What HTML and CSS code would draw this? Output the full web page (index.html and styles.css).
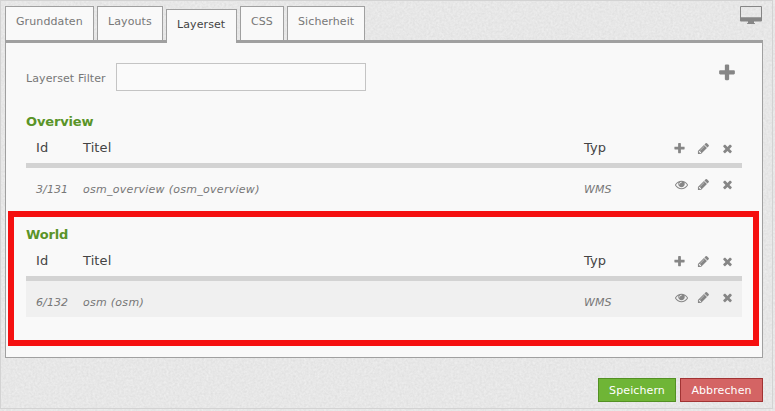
FILE: index.html
```html
<!DOCTYPE html>
<html lang="de">
<head>
<meta charset="utf-8">
<title>Layerset</title>
<link rel="stylesheet" href="styles.css">
</head>
<body>
<svg class="texture" width="775" height="411" aria-hidden="true">
  <filter id="grain" x="0" y="0" width="100%" height="100%" color-interpolation-filters="sRGB">
    <feTurbulence type="fractalNoise" baseFrequency="0.45" numOctaves="2" seed="4"/>
    <feColorMatrix values="0.07 0.03 0 0 0.855  0.07 0.03 0 0 0.855  0.07 0.03 0 0 0.855  0 0 0 0 1"/>
  </filter>
  <rect width="775" height="411" filter="url(#grain)"/>
</svg>
<svg class="symbols" aria-hidden="true">
  <symbol id="plus" viewBox="0 0 1792 1792"><path d="M1600 736v192q0 40-28 68t-68 28h-416v416q0 40-28 68t-68 28h-192q-40 0-68-28t-28-68v-416h-416q-40 0-68-28t-28-68v-192q0-40 28-68t68-28h416v-416q0-40 28-68t68-28h192q40 0 68 28t28 68v416h416q40 0 68 28t28 68z"/></symbol>
  <symbol id="pencil" viewBox="0 0 1792 1792"><path d="M491 1536l91-91-235-235-91 91v107h128v128h107zm523-928q0-22-22-22-10 0-17 7l-542 542q-7 7-7 17 0 22 22 22 10 0 17-7l542-542q7-7 7-17zm-54-192l416 416-832 832h-416v-416zm683 96q0 53-37 90l-166 166-416-416 166-165q36-38 90-38 53 0 91 38l235 234q37 39 37 91z"/></symbol>
  <symbol id="times" viewBox="0 0 1792 1792"><path d="M1490 1322q0 40-28 68l-136 136q-28 28-68 28t-68-28l-294-294-294 294q-28 28-68 28t-68-28l-136-136q-28-28-28-68t28-68l294-294-294-294q-28-28-28-68t28-68l136-136q28-28 68-28t68 28l294 294 294-294q28-28 68-28t68 28l136 136q28 28 28 68t-28 68l-294 294 294 294q28 28 28 68z"/></symbol>
  <symbol id="eye" viewBox="0 0 1792 1792"><path d="M1664 960q-152-236-381-353 61 104 61 225 0 185-131.500 316.500t-316.500 131.500-316.500-131.500-131.500-316.500q0-121 61-225-229 117-381 353 133 205 333.500 326.500t434.500 121.500 434.500-121.500 333.500-326.500zm-720-384q0-20-14-34t-34-14q-125 0-214.500 89.500t-89.500 214.500q0 20 14 34t34 14 34-14 14-34q0-86 61-147t147-61q20 0 34-14t14-34zm848 384q0 34-20 69-140 230-376.500 368.500t-499.500 138.500-499.500-139-376.500-368q-20-35-20-69t20-69q140-229 376.500-368t499.500-139 499.500 139 376.500 368q20 35 20 69z"/></symbol>
</svg>
<div class="page">
  <header class="top">
    <nav class="tabs">
      <a class="tab tab-data">Grunddaten</a>
      <a class="tab tab-layouts">Layouts</a>
      <a class="tab tab-layerset active">Layerset</a>
      <a class="tab tab-css">CSS</a>
      <a class="tab tab-security">Sicherheit</a>
    </nav>
    <svg class="monitor" viewBox="0 0 22 18"><path fill-rule="evenodd" d="M1 0h20a1 1 0 0 1 1 1v13.500a1 1 0 0 1-1 1H14v1.500l1 .3v.7H7v-.7l1-.3v-1.500H1A1 1 0 0 1 0 14.500V1A1 1 0 0 1 1 0zM1 1v10.200h20V1z"/></svg>
  </header>
  <main class="panel">
    <div class="filter">
      <label class="filter-label" for="filter">Layerset Filter</label>
      <input class="filter-input" id="filter" type="text">
      <svg class="add"><use href="#plus"/></svg>
    </div>
    <section class="layerset">
      <h2>Overview</h2>
      <div class="row head"><span>Id</span><span>Titel</span><span>Typ</span>
        <div class="actions"><svg><use href="#plus"/></svg><svg><use href="#pencil"/></svg><svg><use href="#times"/></svg></div>
      </div>
      <div class="row item"><span>3/131</span><span class="title">osm_overview (osm_overview)</span><span>WMS</span>
        <div class="actions"><svg class="eye"><use href="#eye"/></svg><svg><use href="#pencil"/></svg><svg><use href="#times"/></svg></div>
      </div>
    </section>
    <section class="layerset marked">
      <h2>World</h2>
      <div class="row head"><span>Id</span><span>Titel</span><span>Typ</span>
        <div class="actions"><svg><use href="#plus"/></svg><svg><use href="#pencil"/></svg><svg><use href="#times"/></svg></div>
      </div>
      <div class="row item shaded"><span>6/132</span><span class="title">osm (osm)</span><span>WMS</span>
        <div class="actions"><svg class="eye"><use href="#eye"/></svg><svg><use href="#pencil"/></svg><svg><use href="#times"/></svg></div>
      </div>
    </section>
  </main>
  <footer class="buttons">
    <button class="button save">Speichern</button>
    <button class="button cancel">Abbrechen</button>
  </footer>
</div>
</body>
</html>
```
FILE: styles.css
```css
* { box-sizing: border-box; }
body {
  margin: 0;
  width: 775px;
  height: 411px;
  overflow: hidden;
  background: #e6e6e6;
  color: #777;
  font: 11px/14px "DejaVu Sans", sans-serif;
  letter-spacing: 0.1px;
}
svg { display: block; fill: #868686; }
.texture { position: absolute; top: 0; left: 0; z-index: -1; }
.symbols { display: none; }
.page {
  width: 773px;
  height: 409px;
  padding: 5px 9px 0 4px;
  border: 1px solid #d3d3d3;
}
.top {
  display: flex;
  justify-content: space-between;
  height: 34px;
}
.tabs { display: flex; gap: 3px; }
.tab {
  height: 34px;
  padding: 8px 0 0 10px;
  border: 1px solid #a0a0a0;
  border-bottom: 0;
  background: #f9f9f9;
  white-space: nowrap;
}
.tab-data { width: 89px; }
.tab-layouts { width: 66px; }
.tab-layerset { width: 71px; }
.tab-css { width: 44px; }
.tab-security { width: 78px; }
.active {
  position: relative;
  height: 34px;
  margin-top: 3px;
  color: #444;
}
.monitor { width: 22px; height: 18px; margin-right: 1px; }
.panel {
  height: 318px;
  padding: 20px 3px 0 2px;
  border: 1px solid #a0a0a0;
  border-top-width: 3px;
  background: #f9f9f9;
}
.filter {
  display: flex;
  height: 49px;
  padding-left: 18px;
}
.filter-label { width: 90px; padding-top: 9px; }
.filter-input {
  width: 250px;
  height: 28px;
  padding: 0 6px;
  border: 1px solid #c4c4c4;
  background: #fafafa;
  font: inherit;
}
.add { width: 20px; height: 20px; margin: 0 0 0 351px; }
.layerset { height: 99px; padding: 0 17px 0 18px; }
.marked {
  height: 135px;
  padding: 8px 11px 0 12px;
  border: 6px solid #f51010;
}
h2 {
  height: 20px;
  margin: 0;
  color: #5a9428;
  font-size: 13px;
  line-height: 19px;
  letter-spacing: -0.15px;
}
.row {
  display: grid;
  grid-template-columns: 47px 501px 89px 1fr;
  padding-left: 10px;
}
.head {
  height: 36px;
  padding-top: 6px;
  border-bottom: 5px solid #d3d3d3;
  color: #444;
  font-size: 13px;
  line-height: 19px;
}
.item {
  height: 36px;
  padding-top: 15px;
  font-style: italic;
}
.title { letter-spacing: 0.28px; }
.shaded { background: #f0f0f0; }
.actions { display: flex; gap: 11px; height: 13px; }
.actions svg { width: 13px; height: 13px; }
.head .actions { margin-top: 4px; }
.item .actions { margin-top: -5px; }
.actions .eye { margin: 0 -2px 0 2px; }
.buttons {
  display: flex;
  justify-content: flex-end;
  gap: 4px;
  padding-top: 20px;
}
.button {
  height: 24px;
  padding: 1px 0 0;
  border: 1px solid;
  color: #fff;
  font: inherit;
  letter-spacing: inherit;
}
.save { width: 78px; border-color: #539023; background: #6fb536; }
.cancel { width: 83px; border-color: #a13333; background: #d46464; }
```
